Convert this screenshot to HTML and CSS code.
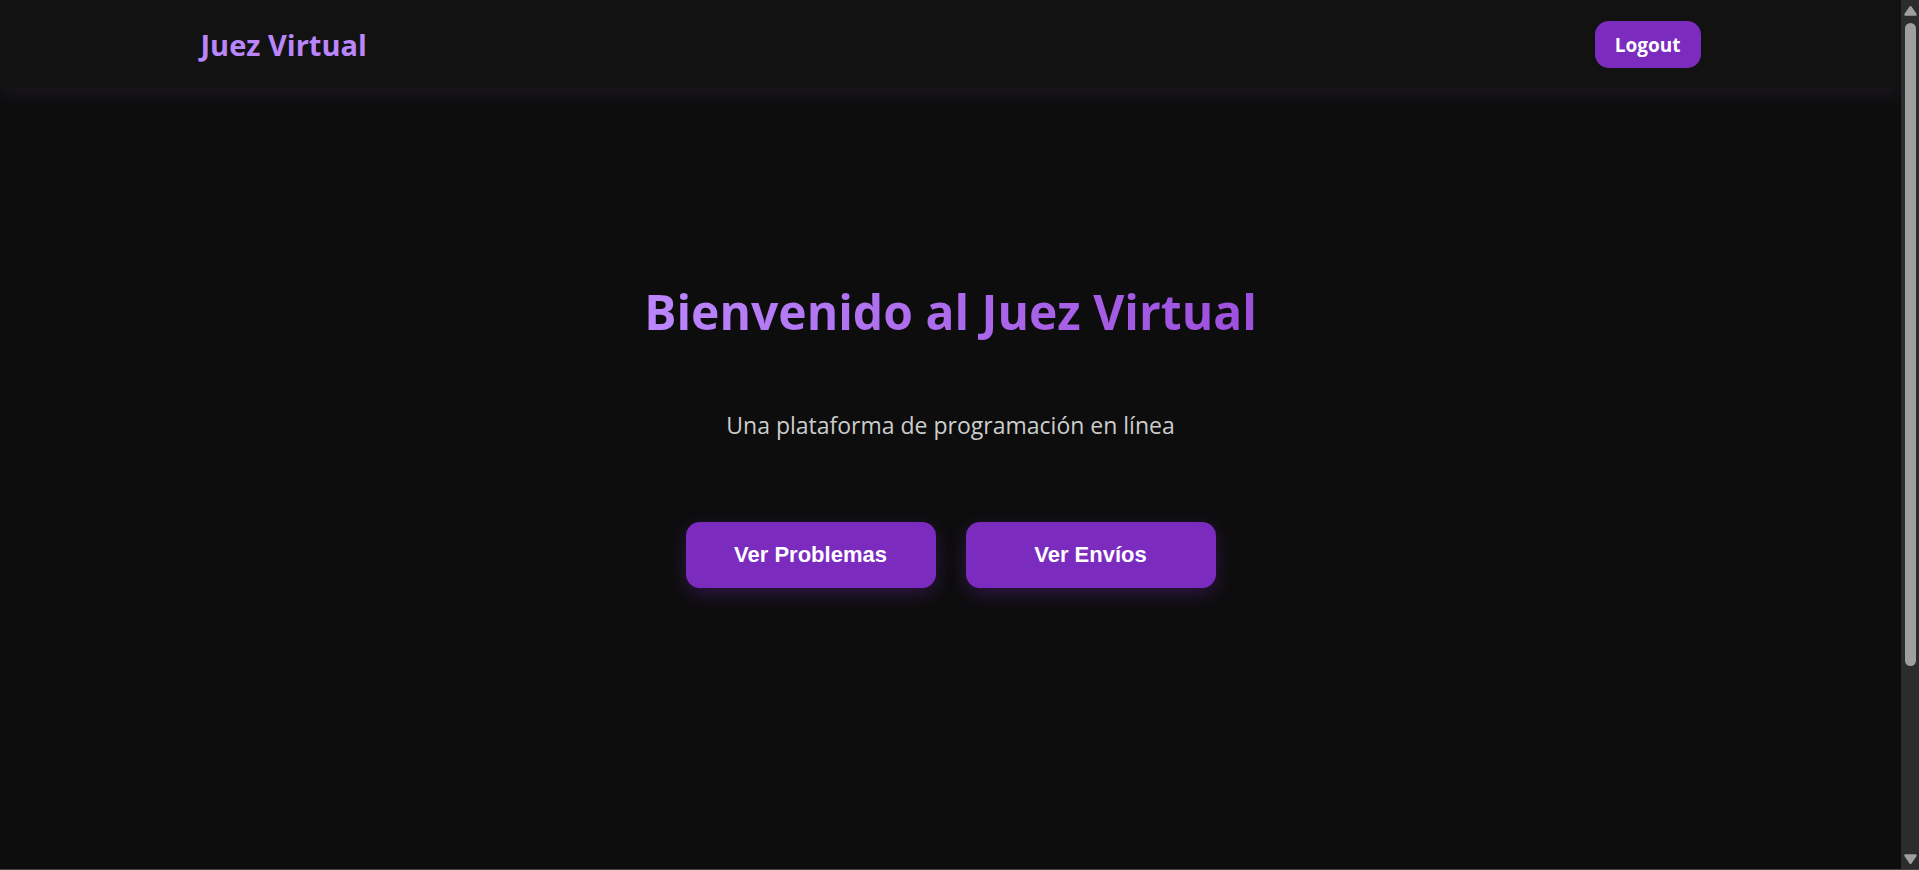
FILE: index.html
```html
<!DOCTYPE html>
<html lang="es">
<head>
<meta charset="utf-8">
<title>Juez Virtual</title>
<link rel="stylesheet" href="styles.css">
</head>
<body>
<div class="page">
  <header class="header">
    <div class="header-inner">
      <a class="logo" href="#">Juez Virtual</a>
      <button class="logout" type="button">Logout</button>
    </div>
  </header>
  <main class="hero">
    <h1 class="title">Bienvenido al Juez Virtual</h1>
    <p class="subtitle">Una plataforma de programación en línea</p>
    <div class="actions">
      <button class="action" type="button">Ver Problemas</button>
      <button class="action" type="button">Ver Envíos</button>
    </div>
  </main>
</div>
<div class="scrollbar" aria-hidden="true">
  <svg class="arrow" viewBox="0 0 13 10"><path d="M5.500 .6 Q6.500 -.4 7.500 .6 L12.600 8 Q13.200 9.600 11.500 9.800 H1.500 Q-.2 9.600 .4 8 Z"/></svg>
  <div class="track"><div class="thumb"></div></div>
  <svg class="arrow" viewBox="0 0 13 10"><path d="M5.500 9.400 Q6.500 10.400 7.500 9.400 L12.600 2 Q13.200 .4 11.500 .2 H1.500 Q-.2 .4 .4 2 Z"/></svg>
</div>
</body>
</html>
```

FILE: styles.css
```css
* { box-sizing: border-box; }

body {
  margin: 0;
  min-height: 100vh;
  display: flex;
  background: #0d0d0d;
  border-bottom: 1px solid #3f444a;
  font-family: "Segoe UI", "Open Sans", "Noto Sans", sans-serif;
}

.page {
  flex: 1;
  display: flex;
  flex-direction: column;
  overflow: hidden;
}

.header {
  padding: 20px;
  background: #121212;
  box-shadow: 0 4px 20px rgba(187, 134, 252, 0.1);
}

.header-inner {
  display: flex;
  justify-content: space-between;
  align-items: center;
  max-width: 1500px;
  height: 48px;
  margin: 0 auto;
}

.logo {
  color: #bb86fc;
  font-size: 29px;
  font-weight: 700;
  text-decoration: none;
}

.logout {
  padding: 2px 20px 0;
  height: 47px;
  border: 0;
  border-radius: 14px;
  background: #7b2cbf;
  color: #fff;
  font-family: inherit;
  font-size: 19px;
  font-weight: 700;
}

.hero {
  flex: 1;
  display: flex;
  flex-direction: column;
  align-items: center;
  padding: 188px 20px 40px;
}

.title {
  margin: 0;
  background: linear-gradient(90deg, #bb86fc, #9d4edd);
  background-clip: text;
  -webkit-background-clip: text;
  color: transparent;
  font-size: 48px;
  line-height: 72px;
  font-weight: 700;
}

.subtitle {
  margin: 60px 0 80px;
  color: #ccc;
  font-size: 23px;
  line-height: 34px;
}

.actions {
  display: flex;
  flex-wrap: wrap;
  justify-content: center;
  gap: 30px;
}

.action {
  width: 250px;
  padding: 20px;
  border: 0;
  border-radius: 14px;
  background: #7b2cbf;
  box-shadow: 0 6px 18px rgba(123, 44, 191, 0.3);
  color: #fff;
  font-family: "Liberation Sans", sans-serif;
  font-size: 22px;
  line-height: 26px;
  font-weight: 700;
}

.scrollbar {
  display: flex;
  flex-direction: column;
  align-items: center;
  gap: 7px;
  width: 18px;
  padding: 6px 0 5px;
  background: #2c2c2c;
}

.arrow {
  width: 13px;
  height: 10px;
  fill: #9f9f9f;
}

.track { flex: 1; }

.thumb {
  width: 11px;
  height: 78%;
  border-radius: 6px;
  background: #9f9f9f;
}
```
